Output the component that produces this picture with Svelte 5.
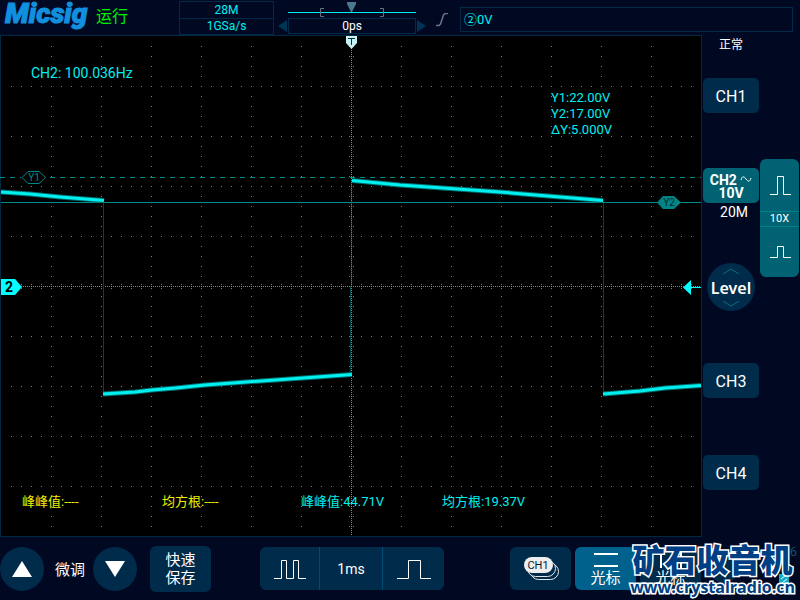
<script>
  const columns = Array.from({ length: 13 }, (_, i) => 51 + i * 50).filter((x) => x !== 351);
  const rows = Array.from({ length: 9 }, (_, i) => 86 + i * 50).filter((y) => y !== 286);
  const cursors = ['Y1:22.00V', 'Y2:17.00V', 'ΔY:5.000V'];
  const measures = [
    { x: 22, text: '峰峰值:----', off: true },
    { x: 162, text: '均方根:----', off: true },
    { x: 301, text: '峰峰值:44.71V', off: false },
    { x: 442, text: '均方根:19.37V', off: false }
  ];
</script>

<div class="app">
  <header>
    <span class="logo">Micsig</span>
    <span class="run">运行</span>
    <div class="stats">
      <span>28M</span>
      <span>1GSa/s</span>
    </div>
    <div class="position">
      <svg class="window" viewBox="0 0 150 18" aria-hidden="true">
        <path d="M11 12.5H139" stroke="#00f0f0" stroke-width="1" />
        <path d="M47 8.5H43.5V16.5H47M103 8.5H106.5V16.5H103" fill="none" stroke="#667080" />
        <path d="M70 2H79V4L75 12H74L70 4Z" fill="#4b7690" />
      </svg>
      <div class="shift">
        <button aria-label="向左"><svg viewBox="0 0 11 16"><path d="M10 2V14L1 8Z" fill="#003456" /></svg></button>
        <output>0ps</output>
        <button aria-label="向右"><svg viewBox="0 0 11 16"><path d="M1 2V14L10 8Z" fill="#003456" /></svg></button>
      </div>
    </div>
    <svg class="slope" viewBox="0 0 12 14" aria-hidden="true">
      <path d="M0 12.5H3L4.500 11L7.500 2L9 .5H12" fill="none" stroke="#6d7380" stroke-width="1.500" />
    </svg>
    <div class="trigger">②0V</div>
  </header>

  <main>
    <svg class="plot" viewBox="0 35 702 502" role="img" aria-label="CH2">
      <rect x="0" y="35" width="702" height="502" fill="#000" />
      <g shape-rendering="crispEdges" fill="none">
        <g stroke="#7c7c7c" stroke-dasharray="1 9">
          {#each columns as x}
            <path d="M{x + 0.5} 46V535" />
          {/each}
          {#each rows as y}
            <path d="M11 {y + 0.5}H700" />
          {/each}
          <path d="M349.500 46V535M353.500 46V535M11 284.500H700M11 288.500H700" />
        </g>
        <path d="M351.500 48V535M1 286.500H700" stroke="#868686" stroke-dasharray="1 1" />
        <path d="M.5 35.500H701.500V536.500H.5Z" stroke="#002840" />
        <path d="M103.500 200V394M603.500 200V394M350.500 286V376" stroke="#004444" />
        <path d="M351.500 180V286" stroke="#00a0a0" stroke-opacity=".45" />
        <path d="M0 177.500H21M50 177.500H701" stroke="#008b8b" stroke-dasharray="5 5" />
        <path d="M1 202.500H701" stroke="#008b8b" />
      </g>

      <g fill="none" stroke-linejoin="round">
        <g stroke="#006b6b" stroke-width="5">
          <path d="M1 192L30 194L60 197L104 200.500M352 180.500L400 185L500 192L603 200.500" />
          <path d="M103 394L135 392L152 390L176 388L205 385L352 374.500M603 394L640 391L665 388L701 385.500" />
        </g>
        <g stroke="#00f0f0" stroke-width="3">
          <path d="M1 192L30 194L60 197L104 200.500M352 180.500L400 185L500 192L603 200.500" />
          <path d="M103 394L135 392L152 390L176 388L205 385L352 374.500M603 394L640 391L665 388L701 385.500" />
        </g>
      </g>

      <path d="M22 177.500L28 171.500H39L45.500 177.500L39 183.500H28Z" fill="#000" stroke="#008b8b" />
      <text class="tag" x="34" y="181" fill="#008b8b">Y1</text>
      <path d="M657 202.500L663 196H674L681 202.500L674 209H663Z" fill="#008484" />
      <text class="tag" x="669" y="206" fill="#002c30">Y2</text>

      <path d="M1 279H15L22 287L15 295H1Z" fill="#00ffff" />
      <text class="zero" x="9" y="292">2</text>
      <path d="M683 287.500L691 280V295Z M691 287H701V288H691Z" fill="#00ffff" />
      <path d="M346 36H357V43L351.500 49L346 43Z" fill="#c6f2f4" />
      <path d="M348 38.500H355M351.500 39V45" stroke="#102838" fill="none" />

      <g class="reading">
        <text class="freq" x="31" y="78">CH2: 100.036Hz</text>
        {#each cursors as line, i}
          <text x="551" y={102 + i * 16}>{line}</text>
        {/each}
        {#each measures as m}
          <text class:off={m.off} x={m.x} y="506">{m.text}</text>
        {/each}
      </g>
    </svg>

    <aside>
      <div class="channels">
        <span class="mode">正常</span>
        <button class="ch first">CH1</button>
        <button class="ch active">
          <span>CH2 <svg viewBox="0 0 12 8" aria-hidden="true"><path d="M1 5C2 1 4 1 6 4S10 7 11 3" fill="none" stroke="#fff" /></svg></span>
          <span>10V</span>
        </button>
        <span class="limit">20M</span>
        <button class="level">
          <svg viewBox="0 0 20 6" aria-hidden="true"><path d="M2 6L10 1L18 6" fill="none" stroke="#08707c" /></svg>
          Level
          <svg viewBox="0 0 20 6" aria-hidden="true"><path d="M2 0L10 5L18 0" fill="none" stroke="#08707c" /></svg>
        </button>
        <button class="ch third">CH3</button>
        <button class="ch fourth">CH4</button>
      </div>
      <div class="probe">
        <button aria-label="增大"><svg viewBox="0 0 22 22"><path d="M1 20.500H8.500V2.500H14.500V20.500H22" /></svg></button>
        <span>10X</span>
        <button aria-label="减小"><svg viewBox="0 0 22 22"><path d="M1 16.500H8.500V5.500H14.500V16.500H22" /></svg></button>
      </div>
    </aside>
  </main>

  <footer>
    <button class="round" aria-label="上"><svg viewBox="0 0 20 16"><path d="M0 16L10 0L20 16Z" fill="#fff" /></svg></button>
    <span class="fine">微调</span>
    <button class="round" aria-label="下"><svg viewBox="0 0 20 16"><path d="M0 0H20L10 16Z" fill="#fff" /></svg></button>
    <button class="save">快速<br />保存</button>
    <div class="timebase">
      <button aria-label="缩小"><svg viewBox="0 0 34 22"><path d="M1 20.500H8.500V2.500H13.500V20.500H20.500V2.500H25.500V20.500H33" /></svg></button>
      <output>1ms</output>
      <button aria-label="放大"><svg viewBox="0 0 34 22"><path d="M0 20.500H11.500V2.500H23.500V20.500H34" /></svg></button>
    </div>
    <button class="tool source" aria-label="CH1">
      <svg viewBox="0 0 38 26">
        <rect x="8.500" y="7.500" width="28" height="16" rx="8" fill="#00294a" stroke="#e8e8e8" />
        <rect x="5.500" y="4.500" width="28" height="16" rx="8" fill="#00294a" stroke="#e8e8e8" />
        <rect x="2" y="1" width="29" height="16" rx="8" fill="#eee" />
        <text x="16" y="13">CH1</text>
      </svg>
    </button>
    <button class="tool on"><svg viewBox="0 0 24 16"><path d="M0 2H24M0 14H24" stroke="#fff" stroke-width="2" /></svg>光标</button>
    <button class="tool"><svg viewBox="0 0 24 16"><path d="M2 0V16M22 0V16" stroke="#fff" stroke-width="2" /></svg>光标</button>
    <span class="knob"></span>
    <div class="status">
      <span>6</span>
      <svg viewBox="0 0 10 14" aria-hidden="true"><path d="M3 0H7V2H10V14H0V2H3Z" fill="#15abc4" /><path d="M2 7L7 3M3 11L8 7" stroke="#d8ffff" /></svg>
    </div>
    <div class="watermark">
      <strong>矿石收音机</strong>
      <a href="http://www.crystalradio.cn">www.crystalradio.cn</a>
    </div>
  </footer>
</div>

<style>
  :global(body) {
    margin: 0;
    background: #000822;
  }
  .app {
    display: flex;
    flex-direction: column;
    min-height: 100vh;
    background: #000822;
    color: #fff;
    font-family: Roboto, "Noto Sans CJK SC", sans-serif;
    font-size: 14px;
  }
  .app * {
    box-sizing: border-box;
  }
  button {
    margin: 0;
    padding: 0;
    border: 0;
    background: #002b4b;
    color: #fff;
    font: inherit;
    cursor: pointer;
  }
  svg {
    display: block;
    flex: none;
  }
  header {
    display: flex;
    align-items: flex-start;
    height: 35px;
    padding-right: 7px;
  }
  .logo {
    width: 92px;
    padding-left: 5px;
    color: #1090df;
    font-size: 28px;
    font-style: italic;
    font-weight: 900;
    line-height: 28px;
    -webkit-text-stroke: 1px #1090df;
  }
  .run {
    width: 87px;
    padding-left: 4px;
    color: #00f000;
    font-size: 16px;
    line-height: 34px;
  }
  .stats {
    display: flex;
    flex-direction: column;
    width: 95px;
    margin: 1px 3px 0 0;
    border: 1px solid #00294a;
    color: #00f0f0;
    font-size: 12px;
    line-height: 16px;
    text-align: center;
  }
  .stats span + span {
    border-top: 1px solid #00294a;
    line-height: 15px;
  }
  .position {
    width: 150px;
  }
  .window {
    width: 150px;
    height: 18px;
  }
  .shift {
    display: flex;
    height: 16px;
  }
  .shift button {
    width: 11px;
    background: none;
  }
  .shift output {
    flex: 1;
    border: 1px solid #00294a;
    font-size: 12px;
    line-height: 14px;
    text-align: center;
  }
  .slope {
    width: 12px;
    height: 14px;
    margin: 13px 12px 0 9px;
  }
  .trigger {
    flex: 1;
    height: 25px;
    margin-top: 7px;
    padding-left: 3px;
    border: 1px solid #00294a;
    color: #00f0f0;
    font-size: 13px;
    line-height: 23px;
  }
  main {
    display: flex;
    flex: 1;
    align-items: flex-start;
  }
  .plot {
    flex: 1;
    min-width: 0;
  }
  .tag {
    font: 10px Roboto, sans-serif;
    text-anchor: middle;
  }
  .zero {
    fill: #000;
    font: bold 14px Roboto, sans-serif;
    text-anchor: middle;
  }
  .reading {
    fill: #00f0f0;
    font-size: 13px;
  }
  .freq {
    font-size: 14px;
  }
  .off {
    fill: #f0f000;
  }
  aside {
    display: flex;
    width: 98px;
    padding-right: 1px;
  }
  .channels {
    display: flex;
    flex-direction: column;
    align-items: center;
    width: 58px;
  }
  .mode {
    font-size: 12px;
    line-height: 20px;
  }
  .ch {
    width: 56px;
    height: 35px;
    padding-top: 2px;
    border-radius: 5px;
    font-size: 16px;
  }
  .first {
    margin-top: 23px;
  }
  .active {
    display: flex;
    flex-direction: column;
    align-items: center;
    justify-content: center;
    margin-top: 55px;
    background: #006273;
    font-size: 14px;
    font-weight: bold;
    line-height: 13px;
  }
  .active svg {
    display: inline;
    width: 12px;
    height: 8px;
    vertical-align: 2px;
  }
  .limit {
    padding-left: 6px;
    font-size: 14px;
    line-height: 18px;
  }
  .level {
    display: flex;
    flex-direction: column;
    align-items: center;
    justify-content: space-between;
    width: 48px;
    height: 48px;
    margin-top: 42px;
    padding: 5px 0 4px;
    border-radius: 50%;
    font-family: "Noto Sans", sans-serif;
    font-size: 16px;
    font-weight: 600;
    line-height: 20px;
  }
  .level svg {
    width: 20px;
    height: 6px;
  }
  .third {
    margin-top: 52px;
  }
  .fourth {
    margin-top: 57px;
  }
  .probe {
    display: flex;
    flex-direction: column;
    width: 39px;
    height: 118px;
    margin-top: 124px;
    overflow: hidden;
    border-radius: 6px;
    background: #006273;
    font-size: 11px;
    text-align: center;
  }
  .probe button {
    display: flex;
    flex: 1;
    align-items: center;
    justify-content: center;
    background: none;
  }
  .probe button:first-child {
    flex: none;
    height: 52px;
  }
  .probe span {
    border: 1px solid #00808a;
    border-width: 1px 0;
    line-height: 14px;
  }
  .probe svg {
    width: 22px;
    height: 22px;
  }
  .probe path,
  .timebase path {
    fill: none;
    stroke: #fff;
  }
  footer {
    position: relative;
    display: flex;
    align-items: center;
    height: 63px;
  }
  .round {
    display: flex;
    align-items: center;
    justify-content: center;
    width: 44px;
    height: 44px;
    border-radius: 50%;
  }
  .round svg {
    width: 20px;
    height: 16px;
  }
  .fine {
    width: 49px;
    padding-left: 3px;
    font-size: 15px;
    text-align: center;
  }
  .save {
    width: 61px;
    height: 46px;
    margin: 0 49px 0 13px;
    border-radius: 6px;
    font-size: 15px;
    line-height: 18px;
  }
  .timebase {
    display: flex;
    width: 184px;
    height: 43px;
    margin-right: 66px;
    overflow: hidden;
    border-radius: 6px;
    background: #002b4b;
  }
  .timebase button {
    display: flex;
    flex: 1;
    align-items: center;
    justify-content: center;
    background: none;
  }
  .timebase button:first-child {
    flex: none;
    width: 59px;
  }
  .timebase svg {
    width: 34px;
    height: 22px;
  }
  .timebase output {
    width: 64px;
    border: 1px solid #004a73;
    border-width: 0 1px;
    font-size: 14px;
    line-height: 45px;
    text-align: center;
  }
  .tool {
    display: flex;
    flex-direction: column;
    align-items: center;
    justify-content: center;
    width: 61px;
    height: 43px;
    margin-right: 4px;
    border-radius: 6px;
    font-size: 15px;
    line-height: 20px;
  }
  .tool svg {
    width: 24px;
    height: 16px;
    margin-top: 2px;
  }
  .source svg {
    width: 38px;
    height: 26px;
    margin: 0;
  }
  .source text {
    fill: #001d38;
    font: 11px Roboto, sans-serif;
    text-anchor: middle;
  }
  .on {
    background: #00618d;
  }
  .knob {
    width: 28px;
    height: 28px;
    margin-left: 5px;
    border-radius: 50%;
    background: #002b4b;
  }
  .status {
    position: absolute;
    right: 3px;
    bottom: 14px;
    display: flex;
    flex-direction: column;
    align-items: flex-end;
    gap: 12px;
    color: #0c5570;
    font-size: 13px;
    line-height: 16px;
  }
  .status svg {
    width: 10px;
    height: 14px;
    margin-right: 8px;
  }
  .watermark {
    position: absolute;
    right: 5px;
    bottom: 3px;
    display: flex;
    flex-direction: column;
    align-items: center;
    color: #003f83;
    -webkit-text-stroke: 3px #fff;
    paint-order: stroke fill;
  }
  .watermark strong {
    font: 900 32px/38px "Noto Sans CJK SC", sans-serif;
  }
  .watermark a {
    color: inherit;
    font: bold 16px/20px "Open Sans", sans-serif;
    text-decoration: none;
  }
</style>
